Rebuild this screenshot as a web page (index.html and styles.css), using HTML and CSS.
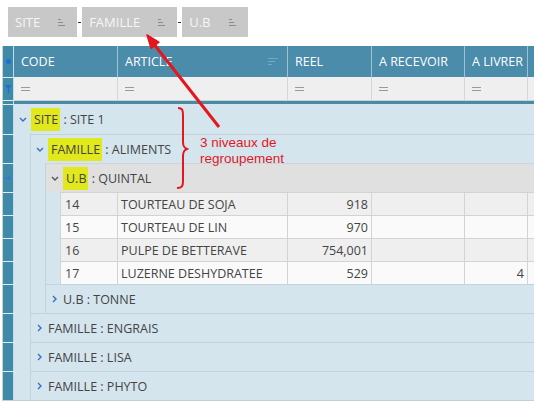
FILE: index.html
```html
<!DOCTYPE html>
<html lang="fr">
<head>
<meta charset="utf-8">
<title>Regroupement</title>
<link rel="stylesheet" href="styles.css">
</head>
<body>
<div class="groupbar">
  <div class="chip">SITE<svg class="chip-sort" width="8" height="7" viewBox="0 0 8 7"><path d="M0 .5h3M0 3.5h5M0 6.5h7" stroke="#8c8c8c" stroke-width="1"/></svg></div>
  <span class="dash"></span>
  <div class="chip">FAMILLE<svg class="chip-sort" width="8" height="7" viewBox="0 0 8 7"><path d="M0 .5h3M0 3.5h5M0 6.5h7" stroke="#8c8c8c" stroke-width="1"/></svg></div>
  <span class="dash"></span>
  <div class="chip">U.B<svg class="chip-sort" width="8" height="7" viewBox="0 0 8 7"><path d="M0 .5h3M0 3.5h5M0 6.5h7" stroke="#8c8c8c" stroke-width="1"/></svg></div>
</div>

<div class="grid">
  <div class="row hdr">
    <div class="ind"><span class="dot"></span></div>
    <div class="hc w-code">CODE</div>
    <div class="hc w-art">ARTICLE<svg class="hsort" width="10" height="8" viewBox="0 0 10 8"><path d="M0 .5h10M0 3.5h7M0 6.5h4" stroke="#78a8bf" stroke-width="1"/></svg></div>
    <div class="hc w-reel">REEL</div>
    <div class="hc w-rec">A RECEVOIR</div>
    <div class="hc w-liv">A LIVRER</div>
    <div class="hc w-x"></div>
  </div>

  <div class="row flt">
    <div class="ind"><svg width="7" height="8" viewBox="0 0 7 8"><path d="M0 0h7L4.2 3.5V8H2.8V3.5z" fill="#1d6fd6"/></svg></div>
    <div class="fc w-code"><span class="eq"></span></div>
    <div class="fc w-art"><span class="eq"></span></div>
    <div class="fc w-reel"><span class="eq"></span></div>
    <div class="fc w-rec"><span class="eq"></span></div>
    <div class="fc w-liv"><span class="eq"></span></div>
    <div class="fc w-x"></div>
  </div>

  <div class="row bar">
    <div class="ind"></div>
    <div class="barfill"></div>
  </div>

  <div class="row g0">
    <div class="ind"></div>
    <div class="gc">
      <svg class="chev" width="8" height="5" viewBox="0 0 8 5"><path d="M1 1l3 3 3-3" fill="none" stroke="#3a6fc0" stroke-width="1.4"/></svg>
      <span class="lbl"><mark>SITE</mark> : SITE 1</span>
    </div>
  </div>

  <div class="row g">
    <div class="ind"></div>
    <div class="sp1"></div>
    <div class="gc lvl">
      <svg class="chev" width="8" height="5" viewBox="0 0 8 5"><path d="M1 1l3 3 3-3" fill="none" stroke="#3a6fc0" stroke-width="1.4"/></svg>
      <span class="lbl"><mark>FAMILLE</mark> : ALIMENTS</span>
    </div>
  </div>

  <div class="row g">
    <div class="ind"><svg width="8" height="6" viewBox="0 0 8 6"><path d="M0 3h6.5M4.5 1l2 2-2 2" fill="none" stroke="#2a78e0" stroke-width="1"/></svg></div>
    <div class="sp1"></div><div class="sp2"></div>
    <div class="gc lvl focus">
      <svg class="chev" width="8" height="5" viewBox="0 0 8 5"><path d="M1 1l3 3 3-3" fill="none" stroke="#555" stroke-width="1.4"/></svg>
      <span class="lbl"><mark>U.B</mark> : QUINTAL</span>
    </div>
  </div>

  <div class="row d odd">
    <div class="ind"></div>
    <div class="sp1"></div><div class="sp2"></div><div class="sp2"></div>
    <div class="dc w-dcode">14</div>
    <div class="dc w-art">TOURTEAU DE SOJA</div>
    <div class="dc w-reel num">918</div>
    <div class="dc w-rec num"></div>
    <div class="dc w-liv num"></div>
    <div class="dc w-x"></div>
  </div>
  <div class="row d even">
    <div class="ind"></div>
    <div class="sp1"></div><div class="sp2"></div><div class="sp2"></div>
    <div class="dc w-dcode">15</div>
    <div class="dc w-art">TOURTEAU DE LIN</div>
    <div class="dc w-reel num">970</div>
    <div class="dc w-rec num"></div>
    <div class="dc w-liv num"></div>
    <div class="dc w-x"></div>
  </div>
  <div class="row d odd">
    <div class="ind"></div>
    <div class="sp1"></div><div class="sp2"></div><div class="sp2"></div>
    <div class="dc w-dcode">16</div>
    <div class="dc w-art">PULPE DE BETTERAVE</div>
    <div class="dc w-reel num">754,001</div>
    <div class="dc w-rec num"></div>
    <div class="dc w-liv num"></div>
    <div class="dc w-x"></div>
  </div>
  <div class="row d even">
    <div class="ind"></div>
    <div class="sp1"></div><div class="sp2"></div><div class="sp2"></div>
    <div class="dc w-dcode">17</div>
    <div class="dc w-art">LUZERNE DESHYDRATEE</div>
    <div class="dc w-reel num">529</div>
    <div class="dc w-rec num"></div>
    <div class="dc w-liv num">4</div>
    <div class="dc w-x"></div>
  </div>

  <div class="row g">
    <div class="ind"></div>
    <div class="sp1"></div><div class="sp2"></div>
    <div class="gc lvl">
      <svg class="chev r" width="5" height="8" viewBox="0 0 5 8"><path d="M1 1l3 3-3 3" fill="none" stroke="#3a6fc0" stroke-width="1.4"/></svg>
      <span class="lbl">U.B : TONNE</span>
    </div>
  </div>

  <div class="row g">
    <div class="ind"></div>
    <div class="sp1"></div>
    <div class="gc lvl">
      <svg class="chev r" width="5" height="8" viewBox="0 0 5 8"><path d="M1 1l3 3-3 3" fill="none" stroke="#3a6fc0" stroke-width="1.4"/></svg>
      <span class="lbl">FAMILLE : ENGRAIS</span>
    </div>
  </div>
  <div class="row g">
    <div class="ind"></div>
    <div class="sp1"></div>
    <div class="gc lvl">
      <svg class="chev r" width="5" height="8" viewBox="0 0 5 8"><path d="M1 1l3 3-3 3" fill="none" stroke="#3a6fc0" stroke-width="1.4"/></svg>
      <span class="lbl">FAMILLE : LISA</span>
    </div>
  </div>
  <div class="row g">
    <div class="ind"></div>
    <div class="sp1"></div>
    <div class="gc lvl">
      <svg class="chev r" width="5" height="8" viewBox="0 0 5 8"><path d="M1 1l3 3-3 3" fill="none" stroke="#3a6fc0" stroke-width="1.4"/></svg>
      <span class="lbl">FAMILLE : PHYTO</span>
    </div>
  </div>
</div>

<svg class="annot" width="534" height="402" viewBox="0 0 534 402">
  <line x1="219" y1="127" x2="153" y2="43" stroke="#e5161d" stroke-width="3"/>
  <polygon points="147,35 151.1,48.3 158.9,42.1" fill="#e5161d" stroke="#e5161d" stroke-width="1.5" stroke-linejoin="round"/>
  <path d="M178,108 C183,108 183,111 183,116 L183,142 C183,147 185,148 187,149 C185,150 183,151 183,156 L183,181 C183,186 182,188 177,188" fill="none" stroke="#e5161d" stroke-width="2"/>
</svg>
<div class="note">3 niveaux de<br>regroupement</div>
</body>
</html>
```

FILE: styles.css
```css
* { box-sizing: border-box; }
html, body { margin: 0; padding: 0; }
body {
  width: 534px;
  height: 402px;
  overflow: hidden;
  position: relative;
  background: #fff;
  font-family: "Open Sans", "Liberation Sans", sans-serif;
  font-size: 12.5px;
  color: #444;
}

/* group panel */
.groupbar {
  height: 46px;
  padding: 7px 0 0 8px;
  display: flex;
  align-items: flex-start;
}
.chip {
  height: 30px;
  background: #c8c8c8;
  color: #f6f6f6;
  font-size: 13px;
  display: flex;
  align-items: center;
  padding: 0 11px 0 7px;
}
.chip-sort { margin-left: 18px; }
.dash {
  width: 3px;
  height: 1px;
  background: #333;
  margin: 15px 1px 0;
}

/* grid */
.grid {
  width: 532px;
  margin-left: 2px;
  border-left: 1px solid #c9d3d8;
  border-bottom: 1px solid #c3cfd6;
  overflow: hidden;
}
.row { display: flex; }
.ind {
  flex: none;
  width: 11px;
  background: #3f89a9;
  border-right: 1px solid #c6dbe4;
  border-top: 1px solid #e3edf2;
  display: flex;
  align-items: center;
  justify-content: center;
}
.hdr .ind { border-top: 0; }

.w-code { width: 104px; }
.w-art { width: 170px; }
.w-reel { width: 84px; }
.w-rec { width: 93px; }
.w-liv { width: 63px; }
.w-x { width: 100px; }
.w-dcode { width: 58px; border-left: 1px solid #d3d3d3; }

.hdr { height: 31px; }
.hc {
  flex: none;
  background: #4a8ca9;
  color: #fff;
  border-right: 1px solid #9fc2d2;
  padding-left: 7px;
  display: flex;
  align-items: center;
  white-space: nowrap;
  overflow: hidden;
}
.hc.w-art { justify-content: space-between; padding-right: 9px; }
.dot {
  width: 5px;
  height: 5px;
  border-radius: 50%;
  background: #1f6fd4;
}

.flt { height: 23px; }
.fc {
  flex: none;
  background: #efefef;
  border-right: 1px solid #d6d6d6;
  padding-left: 7px;
  display: flex;
  align-items: center;
}
.eq {
  width: 9px;
  height: 4px;
  border-top: 1px solid #9a9a9a;
  border-bottom: 1px solid #9a9a9a;
}

.bar { height: 4px; }
.barfill {
  flex: 1;
  background: #4b8aa7;
  border-top: 1px solid #c7d3d9;
}

/* group rows */
.g0 { height: 30px; }
.g { height: 29px; }
.sp1 { flex: none; width: 16px; background: #d4e5ee; }
.sp2 { flex: none; width: 15px; background: #d4e5ee; border-left: 1px solid #c2d3dc; }
.gc {
  flex: 1;
  background: #d4e5ee;
  display: flex;
  align-items: center;
  padding-left: 5px;
}
.gc.lvl {
  border-left: 1px solid #c2d3dc;
  border-top: 1px solid #c2d3dc;
}
.gc.focus { background: #e0e0e0; border-top-color: #cfd4d6; }
.chev { margin-right: 4px; flex: none; }
.chev.r { margin-left: 1px; margin-right: 6px; }
.lbl { white-space: nowrap; }
mark {
  display: inline-block;
  background: #e1e81b;
  color: #444;
  line-height: 23px;
  padding: 0 2px 0 3px;
}

/* data rows */
.d { height: 23px; }
.dc {
  flex: none;
  border-top: 1px solid #d3d3d3;
  border-right: 1px solid #d3d3d3;
  padding: 0 3px 0 4px;
  display: flex;
  align-items: center;
  white-space: nowrap;
  overflow: hidden;
}
.dc.w-art { padding-left: 3px; }
.dc.num { justify-content: flex-end; padding-right: 3px; }
.odd .dc { background: #efefef; }
.even .dc { background: #fafafa; }

/* annotations over the grid */
.annot {
  position: absolute;
  left: 0;
  top: 0;
  pointer-events: none;
}
.note {
  position: absolute;
  left: 200px;
  top: 135px;
  font-family: "Liberation Sans", Arial, sans-serif;
  font-size: 13.5px;
  line-height: 15.5px;
  color: #e3171f;
}
```
